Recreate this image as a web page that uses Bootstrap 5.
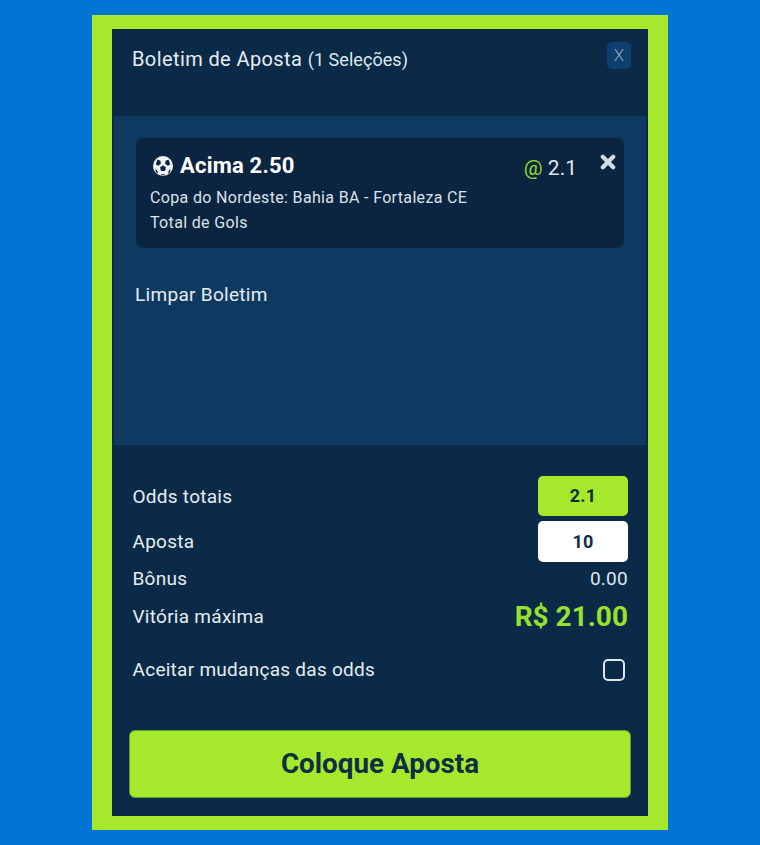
<!DOCTYPE html>
<html lang="pt">
<head>
  <meta charset="UTF-8">
  <meta name="viewport" content="width=device-width, initial-scale=1.0">
  <title>Boletim de Aposta</title>
  <link href="https://cdn.jsdelivr.net/npm/bootstrap@5.3.0/dist/css/bootstrap.min.css" rel="stylesheet">
  <style>
    html, body { height: 845px; overflow: hidden; }
    body {
      background: #0075d3;
      font-family: Roboto, "Liberation Sans", sans-serif;
      color: #e6edf2;
      padding-top: 15px;
    }
    .slip-frame {
      width: 576px;
      height: 815px;
      margin: 0 auto;
      background: #a6e92c;
      padding: 14px 20px;
    }
    .slip-panel {
      height: 787px;
      background: #0b2a47;
    }
    .slip-head {
      height: 87px;
      padding: 13px 17px 0 20px;
    }
    .slip-title { font-size: 20px; letter-spacing: .4px; line-height: 34px; }
    .slip-title small { font-size: 18px; letter-spacing: .05px; color: #dfe7ee; }
    .slip-close {
      width: 24px;
      height: 27px;
      background: #0e3f70;
      border-radius: 5px;
      color: #8fa6bb;
      font-size: 17px;
      font-weight: 300;
      line-height: 27px;
      text-align: center;
    }
    .slip-body {
      height: 329px;
      margin: 0 2px;
      background: #0e3a61;
      padding: 22px 22px 0;
    }
    .bet-card {
      height: 110px;
      background: #0b2540;
      border-radius: 7px;
      padding: 14px 8px 0 14px;
    }
    .bet-name { font-size: 22px; letter-spacing: .2px; font-weight: 700; color: #fff; line-height: 27px; }
    .bet-ball { margin-left: 2px; margin-right: -2px; }
    .bet-odd { font-size: 21px; line-height: 27px; margin-top: 3px; margin-right: 23px; color: #dfe7ee; }
    .bet-at { color: #8fdc2a; }
    .bet-x { margin-top: 2px; }
    .bet-line { font-size: 16px; letter-spacing: .34px; line-height: 25px; color: #dbe3ea; }
    .bet-first { margin-top: 3px; }
    .clear-link { font-size: 19px; letter-spacing: .3px; line-height: 24px; margin-top: 35px; margin-left: -1px; color: #e6edf2; }
    .slip-foot { padding: 31px 20px 0 20.5px; }
    .foot-row { font-size: 19px; letter-spacing: .27px; }
    .foot-label { padding-top: 2px; }
    .odd-box, .stake-box {
      width: 90px;
      border-radius: 5px;
      text-align: center;
      font-size: 18px;
      font-weight: 700;
      color: #0c2f42;
    }
    .odd-box { height: 40px; line-height: 40px; background: #a6e92c; }
    .stake-box { height: 41px; line-height: 41px; background: #fff; }
    .row-aposta { margin-top: 5px; }
    .row-bonus { margin-top: 5px; height: 24px; line-height: 24px; }
    .bonus-val { color: #dfe7ee; }
    .row-win { margin-top: 10px; height: 32px; line-height: 32px; }
    .win-val { font-size: 28px; font-weight: 700; letter-spacing: 0; color: #96e02e; }
    .row-accept { margin-top: 22px; height: 30px; line-height: 30px; }
    .accept-box {
      width: 22px;
      height: 22px;
      margin-right: 3px;
      border: 2px solid #dfe7ee;
      border-radius: 5px;
    }
    .place-btn {
      display: block;
      width: 502px;
      height: 68px;
      margin: 45px 0 0 17px;
      background: #a6e92c;
      border: 1px solid #5c9a2a;
      border-radius: 6px;
      color: #0c2f42;
      font-size: 27.8px;
      font-weight: 700;
      line-height: 66px;
      padding: 0;
    }
  </style>
</head>
<body>
  <div class="slip-frame">
    <div class="slip-panel">
      <!-- Header -->
      <div class="slip-head d-flex justify-content-between align-items-start">
        <div class="slip-title">Boletim de Aposta <small>(1 Seleções)</small></div>
        <div class="slip-close">X</div>
      </div>

      <!-- Selections -->
      <div class="slip-body">
        <div class="bet-card">
          <div class="d-flex justify-content-between align-items-start">
            <div class="bet-name d-flex align-items-center gap-2">
              <svg class="bet-ball" width="22" height="22" viewBox="0 0 22 22" aria-hidden="true">
                <circle cx="11" cy="11" r="10" fill="#f2f5f7"/>
                <path d="M11 10.3l3 2.2-1.1 3.5H9.1L8 12.5z" fill="#0b2540"/>
                <path d="M5.4 4.6l3 1.1.5 3-2.7 2.1-2.4-1.4zM16.6 4.6l-3 1.1-.5 3 2.7 2.1 2.4-1.4z" fill="#0b2540"/>
                <path d="M3 14.4l1.7.7 1.4 3-1.4.2zM19 14.4l-1.7.7-1.4 3 1.4.2z" fill="#0b2540"/>
                <path d="M8.8 19.2h4.4l-.8 1h-2.8z" fill="#0b2540"/>
              </svg>
              <span>Acima 2.50</span>
            </div>
            <div class="d-flex align-items-start ms-auto">
              <div class="bet-odd"><span class="bet-at">@</span> 2.1</div>
              <svg class="bet-x" width="16" height="16" viewBox="0 0 16 16" aria-hidden="true">
                <path d="M2.8 2.8L13.2 13.2M13.2 2.8L2.8 13.2" stroke="#d5dde4" stroke-width="4.2" stroke-linecap="round"/>
              </svg>
            </div>
          </div>
          <div class="bet-line bet-first">Copa do Nordeste: Bahia BA - Fortaleza CE</div>
          <div class="bet-line">Total de Gols</div>
        </div>
        <div class="clear-link">Limpar Boletim</div>
      </div>

      <!-- Totals -->
      <div class="slip-foot">
        <div class="foot-row d-flex justify-content-between align-items-center">
          <span class="foot-label">Odds totais</span>
          <div class="odd-box">2.1</div>
        </div>
        <div class="foot-row row-aposta d-flex justify-content-between align-items-center">
          <span class="foot-label">Aposta</span>
          <div class="stake-box">10</div>
        </div>
        <div class="foot-row row-bonus d-flex justify-content-between">
          <span>Bônus</span>
          <span class="bonus-val">0.00</span>
        </div>
        <div class="foot-row row-win d-flex justify-content-between">
          <span>Vitória máxima</span>
          <span class="win-val">R$ 21.00</span>
        </div>
        <div class="foot-row row-accept d-flex justify-content-between align-items-center">
          <span>Aceitar mudanças das odds</span>
          <div class="accept-box"></div>
        </div>
      </div>
      <button type="button" class="place-btn btn">Coloque Aposta</button>
    </div>
  </div>
  <script src="https://cdn.jsdelivr.net/npm/bootstrap@5.3.0/dist/js/bootstrap.bundle.min.js"></script>
</body>
</html>
